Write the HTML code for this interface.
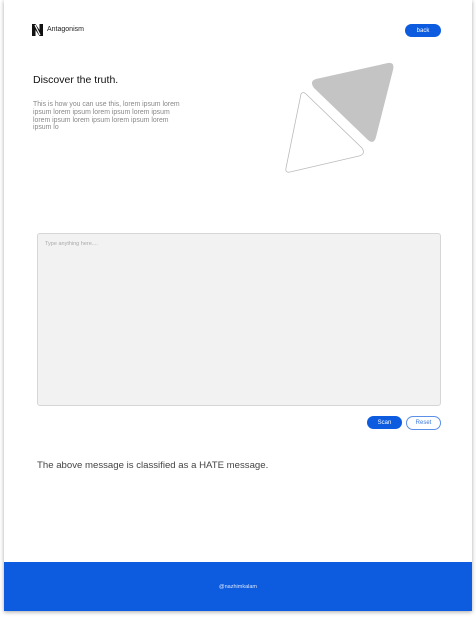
<!DOCTYPE html>
<html><head><style>
body{margin:0;width:476px;height:619px;background:#fff;font-family:"Liberation Sans",sans-serif;position:relative;overflow:hidden}
.card{position:absolute;left:4px;top:0;width:468px;height:611px;background:#fff;box-shadow:0 1px 4px rgba(0,0,0,.35)}
.abs{position:absolute}
.btn{position:absolute;height:13px;border-radius:7px;font-size:6px;line-height:14px;text-align:center}
</style></head><body>
<div class="card"></div>
<svg class="abs" style="left:32px;top:24px" width="11" height="12" viewBox="0 0 11 12"><path d="M0 0h3.5l4 6V0H11v12H7.5l-4-6v6H0z" fill="#111"/><path d="M3 1l5 10" stroke="#fff" stroke-width="1.2"/></svg>
<div class="abs" style="left:47px;top:26px;font-size:7px;color:#222">Antagonism</div>
<div class="btn" style="left:405px;top:24px;width:36px;background:#0d5ce0;color:#fff">back</div>
<div class="abs" style="left:33px;top:74px;font-size:10.5px;color:#111">Discover the truth.</div>
<div class="abs" style="left:33px;top:101px;width:152px;font-size:6.9px;line-height:7.8px;color:#888">This is how you can use this, lorem ipsum lorem ipsum lorem ipsum lorem ipsum lorem ipsum lorem ipsum lorem ipsum lorem ipsum lorem ipsum lo</div>
<svg class="abs" style="left:0;top:0" width="476" height="200">
<path d="M316 79 L388 63 Q395 62 393 70 L376 137 Q374 145 368 140 L314 88 Q309 81 316 79Z" fill="#c4c4c4"/>
<path d="M301 94 Q303 91 306 94 L362 148 Q366 154 359 156 L290 172 Q285 173 286 168 Z" fill="none" stroke="#bbb" stroke-width="0.8"/>
</svg>
<div class="abs" style="left:37px;top:233px;width:402px;height:171px;background:#f2f2f2;border:1px solid #d6d6d6;border-radius:3px"></div>
<div class="abs" style="left:45px;top:241px;font-size:5.5px;color:#aaa">Type anything here....</div>
<div class="btn" style="left:367px;top:416px;width:35px;background:#0d5ce0;color:#fff">Scan</div>
<div class="btn" style="left:406px;top:416px;width:33px;height:12px;border:1px solid #5b8fe8;color:#3b78e0;background:#fff;line-height:13px">Reset</div>
<div class="abs" style="left:37px;top:460px;font-size:9.6px;color:#444">The above message is classified as a HATE message.</div>
<div class="abs" style="left:4px;top:562px;width:468px;height:49px;background:#0d5ce0"></div>
<div class="abs" style="left:4px;top:584px;width:468px;text-align:center;font-size:5.5px;color:#dce6fb">@nazhimkalam</div>
</body></html>
